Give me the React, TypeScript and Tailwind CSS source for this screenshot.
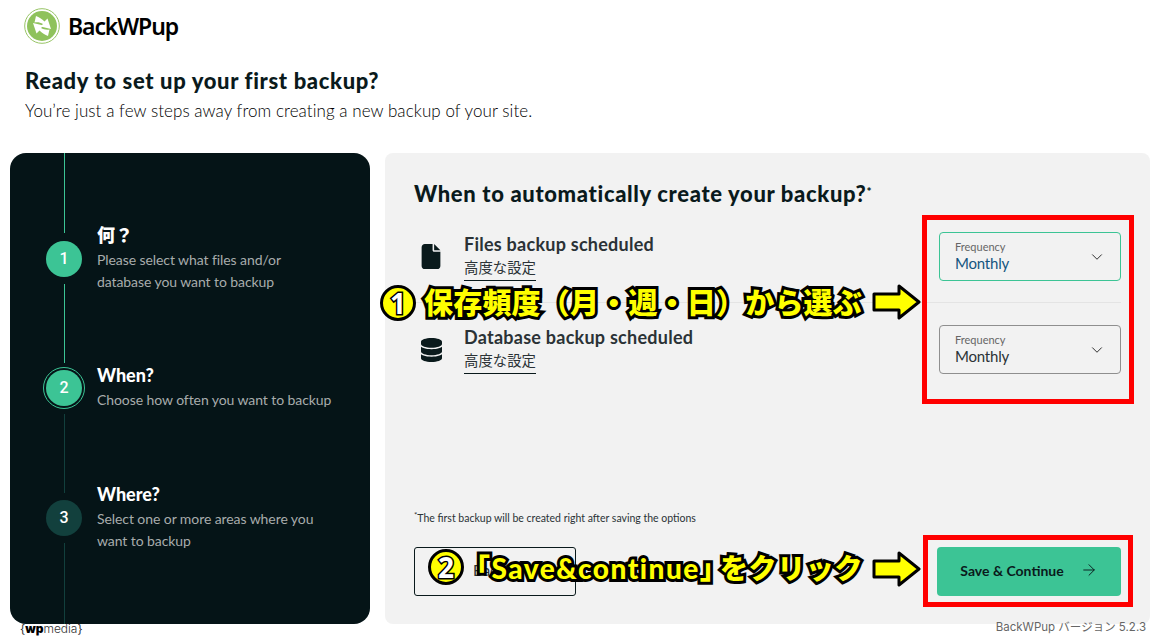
import { FaDatabase, FaFile } from "react-icons/fa6";
import { ArrowRight, ChevronDown } from "lucide-react";

function Logo() {
    const arrow = "M12 8 C15 9 18 11 20.500 13.500 L23.500 10.500 L27 21 L16.500 18.500 L19 16 C16.500 14.500 13.500 14 10.500 14.500 Z";
    return (
        <svg viewBox="0 0 36 36" className="h-9 w-9 shrink-0">
            <circle cx="18" cy="18" r="17.300" fill="none" stroke="#97c465" strokeWidth="1" />
            <circle cx="18" cy="18" r="15" fill="#8fc25c" />
            <path d={arrow} fill="#fff" />
            <path d={arrow} fill="#fff" transform="rotate(180 18 18)" />
        </svg>
    );
}

function RailLine({ height, dark }: { height: string; dark?: boolean }) {
    return <div className={`w-px ${height} ${dark ? "bg-[#12403d]" : "bg-[#3cc495]"}`} />;
}

function Step({ title, children, className }: { title: string; children: React.ReactNode; className: string }) {
    return (
        <div className={className}>
            <h3 className="text-[18px] leading-[22px] font-black text-white">{title}</h3>
            <p className="text-[14px] leading-[22px] mt-[3px] tracking-[-0.08px] text-[#a8acac]">{children}</p>
        </div>
    );
}

function Select({ active }: { active?: boolean }) {
    return (
        <div className={`flex items-center justify-between w-[182px] h-[49px] pl-[15px] pr-[14px] rounded-[4px] border ${active ? "border-[#3cc495]" : "border-[#8f8f8f]"}`}>
            <div>
                <div className="text-[11px] leading-[14px] text-[#666]">Frequency</div>
                <div className={`-mt-[1px] text-[15px] leading-[20px] tracking-[-0.2px] ${active ? "text-[#14557f]" : "text-[#2b3236]"}`}>Monthly</div>
            </div>
            <ChevronDown className="h-[18px] w-[18px] text-[#222]" strokeWidth={1.25} />
        </div>
    );
}

function ScheduleRow({ title, icon, select, className }: { title: string; icon: React.ReactNode; select: React.ReactNode; className: string }) {
    return (
        <div className={`flex items-center ${className}`}>
            <div className="w-[50px] pl-[7px] flex items-center">{icon}</div>
            <div className="flex-1 self-start">
                <div className="text-[18px] leading-[24px] tracking-[0.25px] font-bold text-[#2b3236]">{title}</div>
                <a className="block w-fit mt-[1px] text-[14.400px] leading-[21px] pb-[2px] text-[#2b3236] border-b border-[#0a1a1c]">高度な設定</a>
            </div>
            {select}
        </div>
    );
}

function CalloutArrow({ className }: { className: string }) {
    return (
        <svg viewBox="0 0 50 36" className={`absolute w-[50px] h-[36px] ${className}`}>
            <path d="M2 10 H27 V2 L47 18 L27 34 V26 H2 Z" fill="#ffff00" stroke="#000" strokeWidth="3" strokeLinejoin="round" />
        </svg>
    );
}

function CalloutNumber({ n, className }: { n: string; className: string }) {
    return (
        <div className={`absolute flex items-center justify-center w-9 h-9 rounded-full bg-[#ffff00] border-[3px] border-black font-['Noto_Sans',sans-serif] text-[28px] leading-none font-bold text-white [-webkit-text-stroke:3px_#000] [paint-order:stroke_fill] ${className}`}>
            {n}
        </div>
    );
}

const calloutText = "absolute whitespace-nowrap font-black text-[#ffff00] [-webkit-text-stroke:6px_#000] [paint-order:stroke_fill]";

export default function App() {
    return (
        <div className="relative w-[1160px] h-[638px] overflow-hidden bg-white font-['Lato','Noto_Sans_CJK_JP',sans-serif] text-[#0a1a1c]">
            <header className="flex items-center gap-[8px] pl-[24px] pt-[8px] h-[44px]">
                <Logo />
                <span className="font-['Noto_Sans',sans-serif] text-[23px] font-semibold tracking-[-1.1px] text-black">BackWPup</span>
            </header>

            <div className="pl-[25px] pt-[22px]">
                <h1 className="text-[22px] leading-[30px] font-black tracking-[0.65px]">Ready to set up your first backup?</h1>
                <p className="text-[17px] leading-[29px] tracking-[0.06px] font-light text-black">You’re just a few steps away from creating a new backup of your site.</p>
            </div>

            <main className="flex gap-[15px] px-[10px] mt-[28px] h-[471px]">
                <aside className="flex w-[360px] rounded-[16px] bg-[#051417] overflow-hidden">
                    <div className="flex flex-col items-center w-[42px] ml-[33px] shrink-0 font-['Roboto',sans-serif] font-medium">
                        <RailLine height="h-[80px]" />
                        <div className="flex items-center justify-center mt-[8px] w-9 h-9 rounded-full bg-[#3cc495] text-white text-[16px]">1</div>
                        <div className="mt-[7px]"><RailLine height="h-[79px]" /></div>
                        <div className="flex items-center justify-center mt-[4px] w-[42px] h-[42px] rounded-full border border-[#3cc495]">
                            <div className="flex items-center justify-center w-9 h-9 rounded-full bg-[#3cc495] text-white text-[16px]">2</div>
                        </div>
                        <div className="mt-[5px]"><RailLine height="h-[79px]" dark /></div>
                        <div className="flex items-center justify-center mt-[7px] w-9 h-9 rounded-full bg-[#12403d] text-white text-[16px]">3</div>
                        <div className="mt-[7px]"><RailLine height="h-[81px]" dark /></div>
                    </div>
                    <div className="ml-[12px] flex-1">
                        <Step title="何？" className="pt-[71px]">Please select what files and/or<br />database you want to backup</Step>
                        <Step title="When?" className="pt-[71px]">Choose how often you want to backup</Step>
                        <Step title="Where?" className="pt-[72px]">Select one or more areas where you<br />want to backup</Step>
                    </div>
                </aside>

                <section className="flex flex-col w-[765px] rounded-[8px] bg-[#f2f2f2] pt-[25px] pl-[29px] pr-[29px]">
                    <h2 className="text-[22px] leading-[32px] font-black tracking-[0.65px]">
                        When to automatically create your backup?<sup className="text-[12px]">*</sup>
                    </h2>
                    <div className="mt-[22px]">
                        <ScheduleRow
                            className="pb-[21px] border-b border-[#e4e4e4]"
                            title="Files backup scheduled"
                            icon={<FaFile className="w-[20px] h-[25px] text-[#0a1a1c]" />}
                            select={<Select active />}
                        />
                        <ScheduleRow
                            className="pt-[22px]"
                            title="Database backup scheduled"
                            icon={<FaDatabase className="w-[21px] h-[24px] text-[#0a1a1c]" />}
                            select={<Select />}
                        />
                    </div>
                    <p className="mt-[136px] text-[10.500px] leading-[16px] text-[#2b3236]"><sup>*</sup>The first backup will be created right after saving the options</p>
                    <div className="flex justify-between mt-[21px]">
                        <button className="w-[162px] h-[49px] pr-[12px] pb-[3px] rounded-[3px] border border-[#0a1a1c] text-[15px] text-[#2b3236]">Back</button>
                        <button className="flex items-center justify-center gap-[16px] w-[184px] h-[49px] pb-[3px] rounded-[4px] bg-[#3cc495] text-[14px] font-bold text-[#0a1a1c]">
                            Save &amp; Continue
                            <ArrowRight className="h-[18px] w-[18px]" strokeWidth={1.25} />
                        </button>
                    </div>
                </section>
            </main>

            <div className="flex justify-between pl-[20px] pr-[14px] -mt-[3px]">
                <div className="font-['Inter',sans-serif] text-[12px] leading-[14px] mt-[1px] text-[#333]">
                    {"{"}<b className="font-black text-black">wp</b><span className="font-light">media</span>{"}"}
                </div>
                <div className="font-['Inter','Noto_Sans_CJK_JP',sans-serif] text-[11.500px] leading-[14px] -mt-[1px] text-[#666]">BackWPup バージョン 5.2.3</div>
            </div>

            <div className="absolute left-[922px] top-[215px] w-[212px] h-[189px] border-[5px] border-[#ff0000]" />
            <div className="absolute left-[923px] top-[535px] w-[210px] h-[72px] border-[5px] border-[#ff0000]" />
            <CalloutNumber n="1" className="left-[380px] top-[285px]" />
            <div className={`${calloutText} left-[424px] top-[282px] text-[29px] leading-[42px] tracking-[0.2px]`}>保存頻度（月・週・日）から選ぶ</div>
            <CalloutArrow className="left-[872px] top-[284px]" />
            <CalloutNumber n="2" className="left-[428px] top-[549px]" />
            <div className={`${calloutText} left-[462px] top-[547px] text-[28px] leading-[42px] tracking-[1.5px]`}>「Save&amp;continue」</div>
            <div className={`${calloutText} left-[720px] top-[547px] text-[28px] leading-[42px] tracking-[0.6px]`}>をクリック</div>
            <CalloutArrow className="left-[872px] top-[551px]" />
        </div>
    );
}
